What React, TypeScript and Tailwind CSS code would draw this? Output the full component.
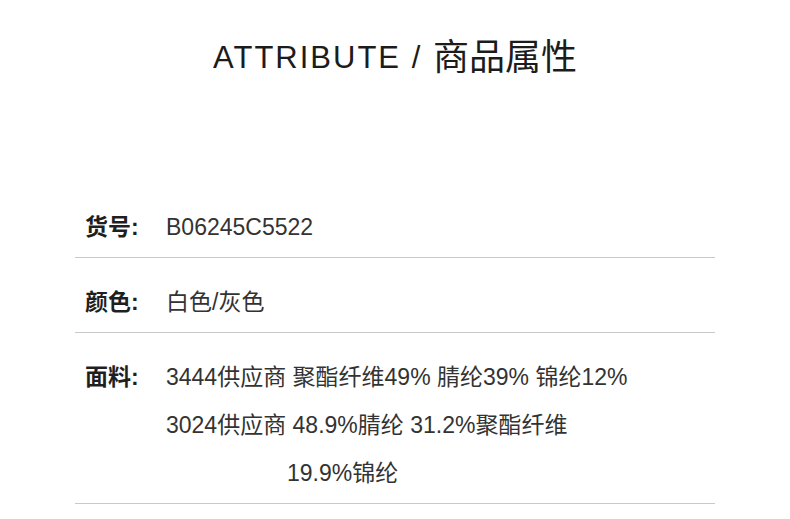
import React from "react";

const FONT = "font-['Liberation_Sans','Noto_Sans_CJK_SC',sans-serif]";

// Attribute Row Component
function AttrRow({
  label,
  lines,
}: {
  label: string;
  lines: { text: string; indent?: boolean }[];
}) {
  return (
    <div className="flex border-b border-[#c9c9c9] pl-[10px] pt-[20px] pb-[6px]">
      <div className="w-[81px] shrink-0 text-[23px] leading-[48px] font-bold text-[#1f1f1f]">
        {label}
      </div>
      <div className="flex flex-col text-[23px] leading-[48px] text-[#333333]">
        {lines.map((l, i) => (
          <div key={i} className={l.indent ? "pl-[121px]" : ""}>
            {l.text}
          </div>
        ))}
      </div>
    </div>
  );
}

export default function App() {
  return (
    <div className={`${FONT} w-[790px] h-[519px] bg-white overflow-hidden`}>
      <div className="pt-[34px] flex justify-center items-center h-[82px] text-[#1c1c1c]">
        <span className="text-[31px] leading-[48px] tracking-[2px]">
          ATTRIBUTE /&nbsp;
        </span>
        <span className="text-[36px] leading-[48px]">商品属性</span>
      </div>
      <div className="mt-[101px] ml-[75px] w-[640px]">
        <AttrRow label="货号:" lines={[{ text: "B06245C5522" }]} />
        <AttrRow label="颜色:" lines={[{ text: "白色/灰色" }]} />
        <AttrRow
          label="面料:"
          lines={[
            { text: "3444供应商 聚酯纤维49% 腈纶39% 锦纶12%" },
            { text: "3024供应商 48.9%腈纶 31.2%聚酯纤维" },
            { text: "19.9%锦纶", indent: true },
          ]}
        />
      </div>
    </div>
  );
}
